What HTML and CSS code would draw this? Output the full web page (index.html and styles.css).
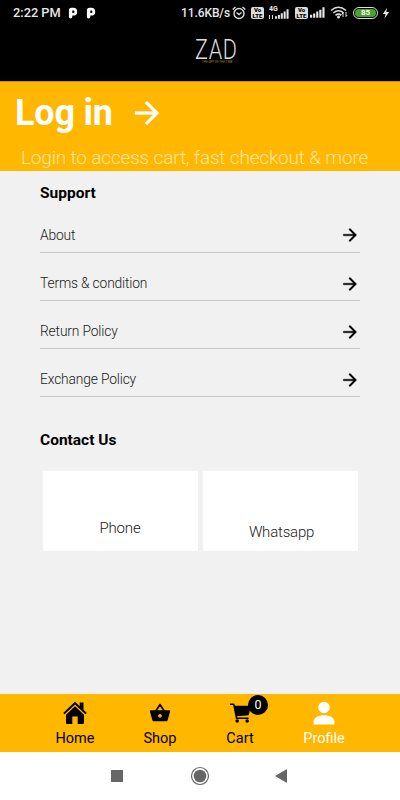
FILE: index.html
```
<!DOCTYPE html>
<html lang="en">
<head>
<meta charset="utf-8">
<title>Profile</title>
<link rel="stylesheet" href="styles.css">
</head>
<body>
<svg width="0" height="0" class="defs">
  <symbol id="arrow" viewBox="0 0 24 24"><path d="M12 4l-1.410 1.410L16.170 11H4v2h12.170l-5.580 5.590L12 20l8-8z"/></symbol>
  <symbol id="parking" viewBox="0 0 10 12"><path fill-rule="evenodd" d="M3.500 .8H5.300A3.900 3.900 0 0 1 5.300 8.600H4.300V9.800A1.700 1.700 0 0 1 .9 9.800V3.400Q.9 .8 3.500 .8zM4.300 3.400V6H5.200A1.300 1.300 0 0 0 5.200 3.400z"/></symbol>
  <symbol id="bars" viewBox="0 0 16 11"><path d="M0 8h2.300v3H0zM3.300 6.500h2.300V11H3.300zM6.600 4.500h2.300V11H6.600zM9.900 2.500h2.300V11H9.900zM13.200 0h2.300v11h-2.300z"/></symbol>
</svg>
<div class="status">
  <span class="time">2:22 PM</span>
  <svg class="p1"><use href="#parking"/></svg>
  <svg class="p2"><use href="#parking"/></svg>
  <span class="speed">11.6KB/s</span>
  <svg class="alarm" viewBox="0 0 14 14" fill="none" stroke="#ddd" stroke-width="1.4"><circle cx="7" cy="7.500" r="5"/><path d="M4.500 6.500L7 8.500l2.500-2M.7 3.500L3.500 1M13.300 3.500L10.500 1"/></svg>
  <span class="volte"><b>Vo</b><b>LTE</b></span>
  <span class="cell"><b>4G</b><i></i><svg class="bars"><use href="#bars"/></svg></span>
  <span class="volte second"><b>Vo</b><b>LTE</b></span>
  <svg class="bars solo"><use href="#bars"/></svg>
  <svg class="wifi" viewBox="0 0 18 13" fill="none" stroke="#ddd" stroke-width="1.600"><path d="M1 4.500Q8.500-2 16 4.500M3.300 7Q8.500 2.500 13.700 7M5.500 9.300Q8.500 6.800 11.200 9.300"/><circle cx="8.500" cy="11" r=".7" fill="#ddd"/><path d="M13 11V7m-1.500 1.500L13 7M16 6v4.500l1.200-1.500" stroke-width="1"/></svg>
  <span class="battery"><b>85</b></span>
  <svg class="bolt" viewBox="0 0 8 12"><path d="M5 1L.8 7H3.500L2.500 11.500 7.200 5H4.300z"/></svg>
</div>
<header class="brand">
  <div class="logo">ZAD</div>
  <div class="tagline">THE APP OF THE TIME</div>
</header>
<section class="banner">
  <div class="login"><h1>Log in</h1><svg><use href="#arrow"/></svg></div>
  <p>Login to access cart, fast checkout &amp; more</p>
</section>
<main>
  <h2 class="support">Support</h2>
  <ul>
    <li><span>About</span><svg><use href="#arrow"/></svg></li>
    <li><span>Terms &amp; condition</span><svg><use href="#arrow"/></svg></li>
    <li><span>Return Policy</span><svg><use href="#arrow"/></svg></li>
    <li><span>Exchange Policy</span><svg><use href="#arrow"/></svg></li>
  </ul>
  <h2 class="contact">Contact Us</h2>
  <div class="cards"><div class="card phone">Phone</div><div class="card whatsapp">Whatsapp</div></div>
</main>
<nav class="tabs">
  <a class="home"><svg viewBox="0 0 24 24"><path d="M12 .8L.2 12l1.400 1.300L12 3.500l10.400 9.800 1.400-1.300-3.300-3.200V1.500h-3.800v3.800zM12 5.300L3 13.800V22q0 1 1 1h5.300v-7.500h5.400V23H20q1 0 1-1v-8.200z"/></svg><span>Home</span></a>
  <a class="shop"><svg viewBox="0 0 24 24"><path d="M17.210 9l-4.380-6.560c-.19-.28-.51-.42-.83-.42-.32 0-.64.14-.83.430L6.790 9H2c-.55 0-1 .45-1 1 0 .09.010.18.040.27l2.540 9.270c.23.840 1 1.460 1.920 1.460h13c.92 0 1.690-.62 1.930-1.460l2.540-9.270L23 10c0-.55-.45-1-1-1h-4.790zM9 9l3-4.400L15 9H9zm3 8c-1.100 0-2-.9-2-2s.9-2 2-2 2 .9 2 2-.9 2-2 2z"/></svg><span>Shop</span></a>
  <a class="cart"><svg viewBox="0 0 22 21"><path d="M0 .5h3.600Q4.500.5 4.700 1.300L5.100 3H22l-2.400 9.800L7.200 13.800l.3 1.300H19.500v1.600H6.200L3.300 2.200H0z"/><circle cx="7.500" cy="18.900" r="1.900"/><circle cx="18" cy="18.900" r="1.900"/></svg><b class="badge">0</b><span>Cart</span></a>
  <a class="profile"><svg viewBox="0 0 22 24"><circle cx="11" cy="6.500" r="5.700"/><path d="M.5 23.500V21C.5 17 5 14.300 11 14.300S21.500 17 21.500 21v2.500z"/></svg><span>Profile</span></a>
</nav>
<footer class="system">
  <i class="recent"></i>
  <svg class="circle" viewBox="0 0 20 20"><circle cx="10" cy="10" r="8.500" fill="none" stroke="#666" stroke-width="1.200"/><circle cx="10" cy="10" r="6.300"/></svg>
  <svg class="back" viewBox="0 0 12 14"><path d="M0 7L12 0v14z"/></svg>
</footer>
</body>
</html>
```
FILE: styles.css
```
* { box-sizing: border-box; margin: 0; padding: 0; }
body { width: 400px; height: 800px; overflow: hidden; display: flex; flex-direction: column; font-family: Roboto, sans-serif; background: #f1f1f1; color: #000; }
svg { display: block; flex: none; }
.defs { position: absolute; }
span { white-space: nowrap; }
.status { height: 25px; background: #000; color: #e6e6e6; fill: #e6e6e6; display: flex; align-items: center; padding-left: 13px; flex: none; }
.time { width: 48px; font-size: 12.8px; font-weight: 500; }
.p1, .p2 { width: 10px; height: 12px; margin-left: 7px; fill: #fff; }
.p2 { margin-left: 8px; }
.speed { margin-left: 85px; width: 50px; font-size: 12px; font-weight: 500; letter-spacing: -.1px; }
.alarm { width: 14px; height: 14px; margin-left: 1px; }
.volte { width: 13px; height: 12px; margin-left: 5px; background: #ddd; color: #000; border-radius: 2px; display: flex; flex-direction: column; align-items: center; }
.volte b { font-size: 6px; line-height: 6px; font-weight: 900; }
.cell { width: 21px; height: 13px; margin-left: 5px; display: flex; align-items: flex-end; position: relative; }
.cell b { position: absolute; left: 0; top: -1px; font-size: 7px; line-height: 8px; }
.cell i { width: 4px; height: 4px; border-left: 1px solid #ddd; border-right: 1px solid #ddd; margin-right: 2px; }
.bars { width: 15px; height: 11px; }
.cell .bars { width: 14px; height: 10px; }
.second { margin-left: 5px; }
.solo { margin-left: 2px; }
.wifi { width: 18px; height: 13px; margin-left: 5px; }
.battery { width: 25px; height: 12px; margin-left: 5px; border: 1px solid #ddd; border-radius: 6px; padding: 1px; display: flex; }
.battery b { flex: 1; background: #49a42c; border-radius: 4px; font-size: 8px; line-height: 8px; text-align: center; color: #fff; }
.bolt { width: 8px; height: 12px; margin-left: 4px; }
.brand { height: 56px; background: #000; flex: none; padding-left: 195px; }
.logo { margin-top: 15px; height: 21px; line-height: 21px; font-size: 27px; font-weight: 300; letter-spacing: .8px; color: #ddd; transform: scaleX(.8); transform-origin: left; }
.tagline { margin-left: 7px; height: 3px; font-size: 3px; line-height: 3px; color: #9a8a16; white-space: nowrap; }
.banner { height: 90px; background: #ffb700; flex: none; color: #fff; border-top: 1px solid #c98e00; }
.login { height: 62px; padding-left: 15px; display: flex; align-items: center; }
.login h1 { width: 116px; font-size: 36px; line-height: 42px; font-weight: 700; letter-spacing: -.2px; white-space: nowrap; }
.login svg { width: 36px; height: 36px; margin-left: -2px; fill: #fff; stroke: #fff; stroke-width: .2px; }
.banner p { padding-left: 21px; font-size: 19px; line-height: 28px; font-weight: 300; letter-spacing: -.170px; color: #ffe8a8; white-space: nowrap; }
main { flex: 1; padding: 0 40px; }
h2 { font-size: 15.500px; line-height: 20px; font-weight: 700; }
.support { margin-top: 12px; }
ul { list-style: none; margin-top: 2px; }
li { height: 48.100px; border-bottom: 1px solid #c8c8c8; display: flex; align-items: flex-end; justify-content: space-between; padding-bottom: 7.200px; }
li span { font-size: 13.800px; line-height: 20px; font-weight: 300; letter-spacing: -.15px; color: #1a1a1a; }
li svg { width: 20px; height: 20px; margin-bottom: -.5px; stroke: #000; stroke-width: .4px; }
.contact { margin-top: 32.200px; }
.cards { display: grid; grid-template-columns: 1fr 1fr; gap: 5px; margin: 21px 2.500px 0; }
.card { height: 80px; background: #fff; text-align: center; font-size: 15px; line-height: 20px; font-weight: 300; letter-spacing: -.2px; color: #1a1a1a; padding-top: 47px; }
.whatsapp { padding-top: 51px; padding-left: 3px; }
.tabs { height: 58px; flex: none; background: #ffb700; display: flex; padding-left: 35px; }
.tabs a { position: relative; width: 80px; display: flex; flex-direction: column; align-items: center; }
.tabs span { font-size: 14.500px; line-height: 18px; margin-top: auto; margin-bottom: 4px; }
.home svg { width: 24px; height: 24px; margin-top: 7px; }
.shop svg { width: 22px; height: 22px; margin-top: 8px; }
.tabs .shop { margin-left: 5px; }
.cart svg { width: 21px; height: 20px; margin-top: 9px; }
.badge { position: absolute; left: 48px; top: 1px; width: 20px; height: 20px; border-radius: 50%; background: #000; color: #fff; font-size: 12.500px; line-height: 20px; text-align: center; font-weight: 400; }
.tabs .profile { margin-left: 4px; color: #fff; fill: #fff; }
.profile svg { width: 22px; height: 24px; margin-top: 7px; }
.system { height: 48px; flex: none; background: #fff; display: flex; align-items: center; padding-left: 111px; fill: #666; }
.recent { width: 12px; height: 12px; background: #666; }
.circle { width: 20px; height: 20px; margin-left: 67px; }
.back { width: 12px; height: 14px; margin-left: 65px; }
```
